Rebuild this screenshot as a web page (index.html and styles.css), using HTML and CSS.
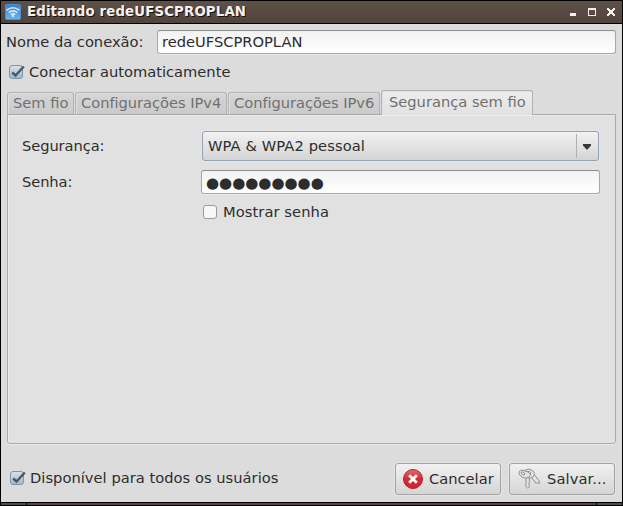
FILE: index.html
```html
<!DOCTYPE html>
<html lang="pt-BR">
<head>
<meta charset="utf-8">
<title>Editando redeUFSCPROPLAN</title>
<link rel="stylesheet" href="styles.css">
</head>
<body>
<div class="window">
  <header class="titlebar">
    <svg class="wifi" width="16" height="16" viewBox="0 0 16 16">
      <defs><linearGradient id="blue" x1="0" y1="0" x2="0" y2="1"><stop offset="0" stop-color="#3b7fc4"/><stop offset="1" stop-color="#68b6f0"/></linearGradient></defs>
      <rect x=".5" y=".5" width="15" height="15" rx="1" fill="url(#blue)" stroke="#4a8fd0"/>
      <g fill="none" stroke="#d5e6f6" stroke-width="1.7"><path d="M1.5 6.3Q8 1.2 14.5 6.3"/><path d="M3.7 8.6Q8 5 12.3 8.6"/><path d="M5.8 10.7Q8 9 10.2 10.7"/></g>
      <circle cx="8" cy="12" r="1.2" fill="#d5e6f6"/>
    </svg>
    <h1>Editando redeUFSCPROPLAN</h1>
    <svg class="controls" width="46" height="10" viewBox="0 0 46 10" shape-rendering="crispEdges">
      <path fill="#f4eeea" d="M0 6h6v3H0z"/>
      <path fill="#f4eeea" fill-rule="evenodd" d="M18 1h8v8h-8zM19 3v5h6V3z"/>
      <path fill="#f4eeea" d="M37 1h2v1h1v1h2V2h1V1h2v2h-1v1h-1v2h1v1h1v2h-2V8h-1V7h-2v1h-1v1h-2V7h1V6h1V4h-1V3h-1z"/>
    </svg>
  </header>
  <main class="content">
    <div class="name-row"><label>Nome da conexão:</label><div class="entry name">redeUFSCPROPLAN</div></div>
    <div class="check-row auto"><span class="box checked"><svg width="17" height="16" viewBox="0 0 17 16"><path d="M3.2 7.5L6.5 10.5 14.8 1.5" /></svg></span><span>Conectar automaticamente</span></div>
    <nav class="tabs">
      <div class="tab t1">Sem fio</div><div class="tab t2">Configurações IPv4</div><div class="tab t3">Configurações IPv6</div><div class="tab active">Segurança sem fio</div>
    </nav>
    <section class="panel">
      <div class="field"><label>Segurança:</label><div class="combo"><span>WPA &amp; WPA2 pessoal</span><div class="arrow"><svg width="8" height="6" viewBox="0 0 8 6"><path d="M0 0h8v1.5L4.5 5.5h-1L0 1.5z" fill="#383838"/></svg></div></div></div>
      <div class="field second"><label>Senha:</label><div class="entry password">●●●●●●●●●</div></div>
      <div class="check-row show"><span class="box"></span><span>Mostrar senha</span></div>
    </section>
    <footer class="actions">
      <div class="check-row all"><span class="box checked"><svg width="17" height="16" viewBox="0 0 17 16"><path d="M3.2 7.5L6.5 10.5 14.8 1.5" /></svg></span><span>Disponível para todos os usuários</span></div>
      <button class="btn cancel"><svg width="22" height="22" viewBox="0 0 22 22"><defs><linearGradient id="red" x1="0" y1="0" x2="0" y2="1"><stop offset="0" stop-color="#e66a6a"/><stop offset=".5" stop-color="#d22b33"/><stop offset="1" stop-color="#c82834"/></linearGradient></defs><circle cx="11" cy="11" r="9.5" fill="url(#red)" stroke="#b4222c"/><path d="M7.2 7.2l7.6 7.6m0-7.6l-7.6 7.6" stroke="#fff" stroke-width="2.8"/></svg><span>Cancelar</span></button>
      <button class="btn save"><svg width="22" height="22" viewBox="0 0 22 22"><g fill="#e4e4e1" stroke="#90928d" stroke-width="1" stroke-linejoin="round"><path d="M13 8.5l3 4.5 1 .2.5 1.8 1.7-.2 2.3.7-.4-2.6-4.6-6z"/><path d="M8 9v9.5l1.7 1.7 1.6-1.5V17l-.7-1 .7-1V9z"/><path fill-rule="evenodd" d="M6.5 2.5Q11-.5 14.5 2.5T15 9Q12.5 11 10 9.5l1.5-2Q13 6.500 12.500 4.500T8 4z"/><path fill-rule="evenodd" d="M1 4Q2 1.500 5 2.200L10 4l2.500 2.500L11 9.500 6.500 10Q1 8.500 1 4zM3 4.500Q3.500 7 6 7.200L7 5.500 4.500 3.800z"/></g></svg><span>Salvar...</span></button>
    </footer>
  </main>
  <div class="grip"></div>
</div>
</body>
</html>
```
FILE: styles.css
```css
* { box-sizing: border-box; }
body { margin: 0; background: #000; color: #2d2d2d; font: 14.67px/18px "DejaVu Sans", sans-serif; }
.window { width: 623px; height: 506px; padding: 1px; background: #000; display: flex; flex-direction: column; }
.titlebar { height: 22px; background: linear-gradient(#5e5047, #51443c); display: flex; align-items: center; padding: 0 6px 0 4px; flex: none; }
.titlebar h1 { margin: 0 auto 0 6px; color: #f5f0ee; font: bold 13.33px/18px "DejaVu Sans", sans-serif; letter-spacing: .13px; text-shadow: 1px 1px #15110f; white-space: nowrap; }
.content { margin-top: 1px; height: 478px; background: #dcdcdc; padding: 6px 6px 0 5px; flex: none; }
.name-row { display: flex; height: 24px; align-items: center; }
.name-row label { width: 151px; }
.entry { height: 24px; border: 1px solid #a8a8a8; border-top-color: #8c8c8c; border-radius: 3px; background: linear-gradient(#f2f2f2, #fff); padding: 2px 4px; box-shadow: 0 1px #ececec; }
.entry.name { flex: 1; }
.check-row { display: flex; align-items: center; height: 18px; }
.auto { margin: 9px 0 0 3px; }
.box { width: 14px; height: 14px; border: 1px solid #9a9a9a; border-radius: 3px; background: #f8f8f8; margin-right: 6px; flex: none; }
.checked { border-color: #7f94a8; background: linear-gradient(#d6e1eb, #a3b8cb); }
.checked svg { display: block; margin: -1px; overflow: visible; }
.checked path { fill: none; stroke: #4b5965; stroke-width: 2.4; }
.tabs { display: flex; align-items: flex-start; height: 24px; margin: 9px 0 0 1px; color: #707070; }
.tab { height: 22px; margin: 2px 1px 0 0; border: 1px solid #b2b2b2; border-bottom: 0; border-radius: 3px 3px 0 0; padding: 1px 5px; background: linear-gradient(#d6d6d6, #cacaca); white-space: nowrap; flex: none; box-shadow: inset 1px 1px #e0e0e0; }
.t1 { width: 67px; }
.t2, .t3 { width: 152px; letter-spacing: -.03px; }
.tab.active { height: 25px; width: 152px; margin: 0; padding: 2px 7px; background: linear-gradient(#ededed, #e1e1e1); position: relative; }
.panel { height: 330px; width: 609px; margin-left: 1px; border: 1px solid #a9a9a9; border-radius: 0 0 3px 3px; background: #e1e1e1; padding: 16px 14px; box-shadow: inset 1px 1px #ebebeb, 0 1px #ebebeb; }
.field { display: flex; align-items: center; height: 30px; }
.field label { width: 180px; flex: none; letter-spacing: -.08px; }
.combo { width: 397px; height: 30px; border: 1px solid #94a3b3; border-radius: 3px; background: linear-gradient(#f2f2f2, #d4d4d4); display: flex; align-items: center; padding-left: 5px; box-shadow: 0 0 0 1px #e6e6e6; }
.combo span { letter-spacing: .1px; }
.arrow { margin-left: auto; width: 22px; height: 24px; border-left: 1px solid #b0b0b0; display: flex; align-items: center; justify-content: center; padding: 2px 2px 0 0; }
.second { height: 24px; margin-top: 9px; }
.password { width: 399px; margin-left: -1px; font-size: 15px; padding-top: 3px; }
.show { margin: 9px 0 0 181px; letter-spacing: .08px; }
.actions { display: flex; align-items: center; height: 32px; margin-top: 19px; padding-right: 1px; }
.all { margin: -2px auto 0 4px; letter-spacing: .03px; }
.btn { height: 32px; width: 106px; border: 1px solid #a4a4a4; border-radius: 3px; background: linear-gradient(#f1f1f1, #d5d5d5); padding: 0 6px; display: flex; align-items: center; gap: 5px; font: inherit; color: inherit; box-shadow: 0 0 0 1px #e4e4e4; }
.save { margin-left: 8px; padding-left: 8px; gap: 7px; letter-spacing: .1px; }
.grip { height: 2px; margin-top: 1px; background: linear-gradient(90deg, #564a43 25px, #000 25px 26px, #564a43 26px 595px, #000 595px 596px, #564a43 596px); flex: none; }
```
